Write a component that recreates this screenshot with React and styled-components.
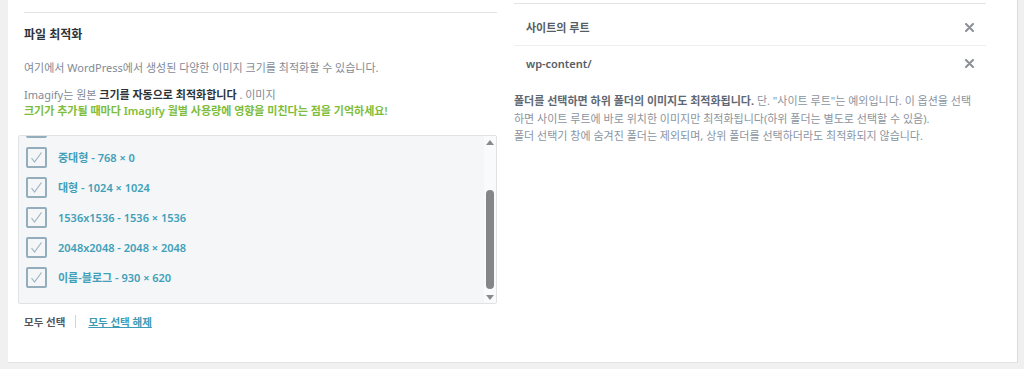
import React from 'react';
import styled, {createGlobalStyle} from 'styled-components';

const sizes = [
    {id: 'thumbnail', name: '썸네일', w: 150, h: 150},
    {id: 'medium', name: '중간', w: 300, h: 300},
    {id: 'medium_large', name: '중대형', w: 768, h: 0},
    {id: 'large', name: '대형', w: 1024, h: 1024},
    {id: '1536x1536', name: '1536x1536', w: 1536, h: 1536},
    {id: '2048x2048', name: '2048x2048', w: 2048, h: 2048},
    {id: 'blog', name: '이름-블로그', w: 930, h: 620},
];

const folders = ['사이트의 루트', 'wp-content/'];

function Check() {
    return (
        <svg width="13" height="13" viewBox="0 0 13 13">
            <polyline points="1.5,7 4.5,11 11.5,1.5" fill="none" stroke="#9fb3c0" strokeWidth="1.2" />
        </svg>
    );
}

function Cross() {
    return (
        <svg width="9" height="9" viewBox="0 0 9 9">
            <path d="M1 1 L8 8 M8 1 L1 8" stroke="#8b9096" strokeWidth="2" strokeLinecap="round" />
        </svg>
    );
}

export default function App() {
    return (
        <>
            <Global />
            <Page>
                <Panel>
                    <Left>
                        <Title>파일 최적화</Title>
                        <Text>여기에서 WordPress에서 생성된 다양한 이미지 크기를 최적화할 수 있습니다.</Text>
                        <Text>
                            Imagify는 원본 <Strong>크기를 자동으로 최적화합니다</Strong> . 이미지
                            <br />
                            <Green>크기가 추가될 때마다 Imagify 월별 사용량에 영향을 미친다는 점을 기억하세요!</Green>
                        </Text>
                        <ListBox>
                            <Viewport>
                                <Items>
                                    {sizes.map((s) => (
                                        <Item key={s.id}>
                                            <Box><Check /></Box>
                                            <Label>{s.name} - {s.w} × {s.h}</Label>
                                        </Item>
                                    ))}
                                </Items>
                            </Viewport>
                            <Scrollbar>
                                <Arrow up />
                                <Track>
                                    <Thumb />
                                </Track>
                                <Arrow />
                            </Scrollbar>
                        </ListBox>
                        <Actions>
                            <Plain>모두 선택</Plain>
                            <Sep />
                            <LinkBtn>모두 선택 해제</LinkBtn>
                        </Actions>
                    </Left>
                    <Right>
                        <Folders>
                            {folders.map((f) => (
                                <Folder key={f}>
                                    <span>{f}</span>
                                    <Cross />
                                </Folder>
                            ))}
                        </Folders>
                        <Note>
                            <NoteStrong>폴더를 선택하면 하위 폴더의 이미지도 최적화됩니다.</NoteStrong> 단. "사이트 루트"는 예외입니다. 이 옵션을 선택하면 사이트 루트에 바로 위치한 이미지만 최적화됩니다(하위 폴더는 별도로 선택할 수 있음).
                            <br />
                            폴더 선택기 창에 숨겨진 폴더는 제외되며, 상위 폴더를 선택하더라도 최적화되지 않습니다.
                        </Note>
                    </Right>
                </Panel>
            </Page>
        </>
    );
}

const Global = createGlobalStyle`
    body {
        margin: 0;
        background: #f0f0f0;
        font-family: "Noto Sans", "Noto Sans CJK KR", sans-serif;
    }
`;
const Page = styled.div`
    width: 1024px;
    height: 369px;
    padding: 0 6px 6px 8px;
    box-sizing: border-box;
`;
const Panel = styled.div`
    height: 100%;
    box-sizing: border-box;
    background: #fff;
    border-right: 1px solid #dcdcdc;
    border-bottom: 1px solid #e4e4e4;
    display: grid;
    grid-template-columns: 473px 472px;
    column-gap: 17px;
    padding-left: 16px;
`;
const Left = styled.div`
    margin-top: 12px;
    border-top: 1px solid #e2e4e7;
    display: flex;
    flex-direction: column;
`;
const Title = styled.h3`
    margin: 14px 0 0;
    font-size: 12px;
    font-weight: 700;
    color: #2c3338;
    line-height: 16px;
`;
const Text = styled.p`
    margin: 17px 0 0;
    font-size: 11px;
    line-height: 16px;
    color: #7f8a96;
    &:last-of-type { margin-top: 11px; }
`;
const Strong = styled.strong`
    color: #2c3338;
`;
const Green = styled.span`
    color: #7dbd3a;
    font-weight: 600;
`;
const ListBox = styled.div`
    margin: 16px 0 0 -6px;
    height: 169px;
    box-sizing: border-box;
    background: #f4f6f8;
    border: 1px solid #e0e3e6;
    border-radius: 2px;
    display: flex;
`;
const Viewport = styled.div`
    flex: 1;
    overflow: hidden;
`;
const Items = styled.ul`
    list-style: none;
    margin: -54px 0 0;
    padding: 0 0 0 7px;
`;
const Item = styled.li`
    height: 30px;
    display: flex;
    align-items: center;
    gap: 11px;
`;
const Box = styled.span`
    width: 21px;
    height: 21px;
    box-sizing: border-box;
    border: 2px solid #93adbd;
    border-radius: 2px;
    display: flex;
    align-items: center;
    justify-content: center;
`;
const Label = styled.span`
    font-size: 11px;
    font-weight: 600;
    color: #409fb9;
`;
const Scrollbar = styled.div`
    width: 12px;
    background: #f9fafb;
    display: flex;
    flex-direction: column;
    align-items: center;
`;
const Arrow = styled.span`
    height: 12px;
    width: 0;
    display: flex;
    align-items: center;
    &::before {
        content: '';
        border-left: 4px solid transparent;
        border-right: 4px solid transparent;
        ${(p) => (p.up ? 'border-bottom: 5px solid #8a8a8a;' : 'border-top: 5px solid #8a8a8a;')}
        margin-left: -4px;
    }
`;
const Track = styled.div`
    flex: 1;
    width: 8px;
    padding-top: 42px;
    box-sizing: border-box;
    display: flex;
`;
const Thumb = styled.div`
    width: 8px;
    height: 99px;
    border-radius: 4px;
    background: #868686;
`;
const Actions = styled.div`
    margin-top: 9px;
    display: flex;
    align-items: center;
    height: 16px;
    font-size: 10.5px;
    font-weight: 600;
`;
const Plain = styled.span`
    color: #50575e;
`;
const Sep = styled.span`
    width: 1px;
    height: 13px;
    background: #d0d4d8;
    margin: 0 12px 0 10px;
`;
const LinkBtn = styled.span`
    color: #3d9bb5;
    text-decoration: underline;
`;
const Right = styled.div`
    margin-top: 3px;
    border-top: 1px solid #e2e4e7;
`;
const Folders = styled.ul`
    list-style: none;
    margin: 0;
    padding: 0;
`;
const Folder = styled.li`
    height: 41px;
    box-sizing: border-box;
    padding: 5px 12px 0;
    display: flex;
    align-items: center;
    justify-content: space-between;
    font-size: 11px;
    font-weight: 600;
    color: #555d66;
    & + & {
        border-top: 1px solid #eceef0;
        height: 36px;
        padding-top: 0;
    }
`;
const Note = styled.p`
    margin: 11px 0 0;
    padding-right: 6px;
    font-size: 11px;
    line-height: 17.5px;
    color: #8a94a0;
`;
const NoteStrong = styled.strong`
    color: #5f6872;
`;
